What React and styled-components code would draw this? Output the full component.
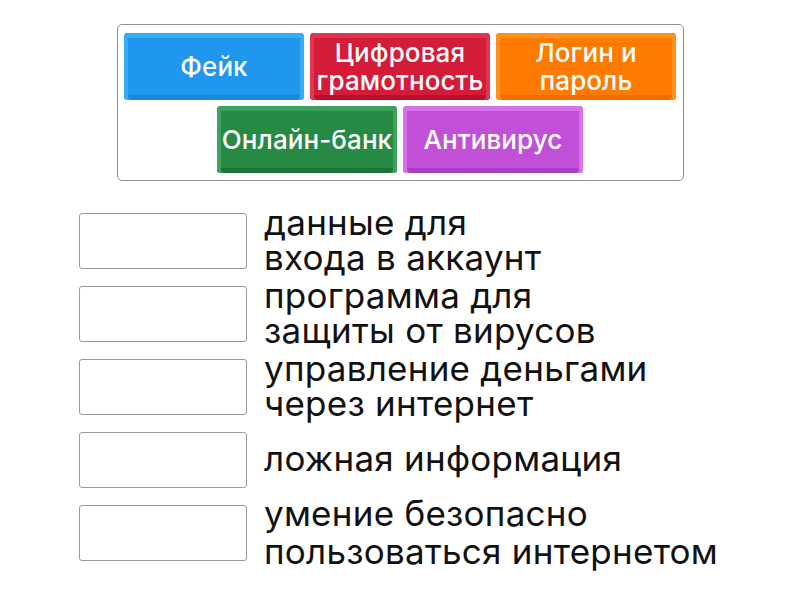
import React from "react";
import styled, { createGlobalStyle } from "styled-components";

const Global = createGlobalStyle`
  html, body { margin: 0; padding: 0; background: #fff; }
  body { font-family: Inter, "Noto Sans", sans-serif; }
`;

const Page = styled.div`
  width: 800px;
  height: 600px;
  display: flex;
  flex-direction: column;
  align-items: center;
  padding-top: 24px;
  box-sizing: border-box;
`;

const Bank = styled.div`
  width: 567px;
  box-sizing: border-box;
  border: 1px solid #8f8f8f;
  border-radius: 5px;
  padding: 8px 6px 7px;
  display: flex;
  flex-wrap: wrap;
  justify-content: center;
  gap: 6px;
`;

const Tile = styled.div`
  width: 180px;
  height: 67px;
  box-sizing: border-box;
  border-radius: 4px;
  background: ${(p) => p.$main};
  box-shadow: inset 0 5px 0 ${(p) => p.$light}, inset 4px 0 0 ${(p) => p.$light},
    inset -4px 0 0 ${(p) => p.$light}, inset 0 -5px 0 ${(p) => p.$dark};
  display: flex;
  align-items: center;
  justify-content: center;
  text-align: center;
  color: #fff;
  font-family: Inter, sans-serif;
  font-weight: 500;
  font-size: 26px;
  line-height: 28px;
  letter-spacing: 0.1px;
  padding: 0 1px;
  white-space: nowrap;
`;

const Pairs = styled.div`
  margin-top: 32px;
  width: 800px;
  display: flex;
  flex-direction: column;
  gap: 17px;
  padding-left: 79px;
  box-sizing: border-box;
`;

const Row = styled.div`
  display: flex;
  align-items: center;
  height: 56px;
  gap: 17px;
`;

const Slot = styled.div`
  width: 168px;
  height: 56px;
  box-sizing: border-box;
  border: 1px solid #9a9a9a;
  border-radius: 3px;
  background: #fff;
  flex: none;
`;

const Def = styled.div`
  font-family: Inter, sans-serif;
  font-size: 35px;
  line-height: ${(p) => p.$lh}px;
  letter-spacing: 0.25px;
  color: #111;
  white-space: nowrap;
  margin-top: -3px;
`;

const tiles = [
  { t: ["Фейк"], main: "#1f97ef", light: "#37acf8", dark: "#1888db" },
  { t: ["Цифровая", "грамотность"], main: "#d41c38", light: "#e33550", dark: "#bb0f2b" },
  { t: ["Логин и", "пароль"], main: "#ff7b00", light: "#ff9020", dark: "#f06d00" },
  { t: ["Онлайн-банк"], main: "#278a44", light: "#3ba35a", dark: "#1c7535" },
  { t: ["Антивирус"], main: "#c24fd8", light: "#d872ec", dark: "#a93ec0" },
];

const defs = [
  { l: ["данные для", "входа в аккаунт"], lh: 35 },
  { l: ["программа для", "защиты от вирусов"], lh: 35 },
  { l: ["управление деньгами", "через интернет"], lh: 35 },
  { l: ["ложная информация"], lh: 35 },
  { l: ["умение безопасно", "пользоваться интернетом"], lh: 38 },
];

export default function App() {
  return (
    <>
      <Global />
      <Page>
        <Bank>
          {tiles.map((x, i) => (
            <Tile key={i} $main={x.main} $light={x.light} $dark={x.dark}>
              <div>
                {x.t.map((l, j) => (
                  <div key={j}>{l}</div>
                ))}
              </div>
            </Tile>
          ))}
        </Bank>
        <Pairs>
          {defs.map((d, i) => (
            <Row key={i}>
              <Slot />
              <Def $lh={d.lh}>
                {d.l.map((l, j) => (
                  <div key={j}>{l}</div>
                ))}
              </Def>
            </Row>
          ))}
        </Pairs>
      </Page>
    </>
  );
}
